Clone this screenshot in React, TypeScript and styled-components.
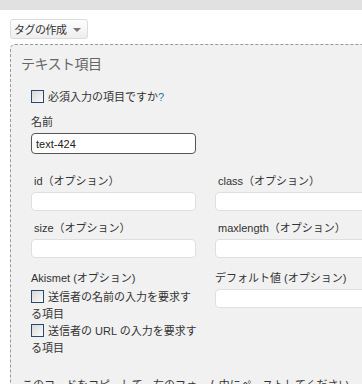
import styled, { createGlobalStyle } from 'styled-components';

const GlobalStyle = createGlobalStyle`
  html, body {
    margin: 0;
    padding: 0;
    background: #fff;
    overflow: hidden;
  }
  body {
    font-family: "Liberation Sans", Arial, "Noto Sans CJK JP", sans-serif;
    font-size: 11px;
    line-height: 17px;
    color: #333;
  }
`;

const Page = styled.div`
  width: 362px;
  height: 384px;
  overflow: hidden;
`;

const TopBar = styled.div`
  height: 10px;
  background: #e1e1e1;
`;

const ButtonRow = styled.div`
  display: flex;
  padding: 9px 0 5px 10px;
`;

const DropButton = styled.button`
  display: inline-flex;
  align-items: center;
  gap: 6px;
  height: 20px;
  padding: 0 6px 0 3px;
  border: 1px solid #dcdcdc;
  border-radius: 3px;
  background: linear-gradient(#fefefe, #eeeeee);
  font-family: inherit;
  font-size: 11px;
  letter-spacing: -0.5px;
  color: #333;
  white-space: nowrap;
  box-sizing: border-box;
`;

const Caret = styled.span`
  width: 0;
  height: 0;
  border-left: 4px solid transparent;
  border-right: 4px solid transparent;
  border-top: 4px solid #777;
  margin-top: 1px;
`;

const Panel = styled.div`
  margin-left: 10px;
  width: 400px;
  min-height: 340px;
  background: #f1f1f1;
  border-top: 1px dashed #999;
  border-left: 1px dashed #999;
  border-top-left-radius: 5px;
  padding: 9px 0 0 10px;
  box-sizing: border-box;
`;

const Title = styled.h3`
  margin: 0 0 15px 0;
  font-size: 14px;
  font-weight: normal;
  color: #666;
  line-height: 20px;
  letter-spacing: -0.5px;
`;

const Form = styled.div`
  padding-left: 10px;
`;

const CheckLine = styled.div`
  width: 169px;
`;

const Box = styled.span`
  display: inline-block;
  width: 11px;
  height: 11px;
  margin-right: 4px;
  vertical-align: -2px;
  border: 1px solid #2b4a6b;
  background: linear-gradient(135deg, #d8d8d8, #fbfbfb);
`;

const Help = styled.span`
  color: #21759b;
`;

const Label = styled.div<{ $indent?: boolean }>`
  padding-left: ${(p) => (p.$indent ? '3px' : '0')};
  margin-bottom: 2px;
  white-space: nowrap;
`;

const Input = styled.input<{ $strong?: boolean }>`
  display: block;
  box-sizing: border-box;
  width: 165px;
  height: ${(p) => (p.$strong ? '21px' : '19px')};
  padding: 0 4px;
  border: 1px solid ${(p) => (p.$strong ? '#555' : '#dfdfdf')};
  border-radius: 4px;
  background: #fff;
  font-family: "Liberation Sans", Arial, sans-serif;
  font-size: 11px;
  color: #222;
  outline: none;
`;

const Grid = styled.div`
  display: grid;
  grid-template-columns: 165px 165px;
  column-gap: 19px;
  row-gap: 9px;
  margin-top: 19px;
`;

const Field = styled.div<{ $spaced?: boolean }>`
  margin-top: ${(p) => (p.$spaced ? '3px' : '0')};
`;

const Footer = styled.p`
  margin: 20px 0 0 -9px;
  white-space: nowrap;
`;

export default function App() {
  return (
    <Page>
      <GlobalStyle />
      <TopBar />
      <ButtonRow>
        <DropButton>
          タグの作成
          <Caret />
        </DropButton>
      </ButtonRow>
      <Panel>
        <Title>テキスト項目</Title>
        <Form>
          <CheckLine style={{ marginBottom: 8 }}>
            <Box />
            必須入力の項目ですか<Help>?</Help>
          </CheckLine>
          <Label>名前</Label>
          <Input $strong defaultValue="text-424" />
          <Grid>
            <Field>
              <Label $indent>id（オプション）</Label>
              <Input />
            </Field>
            <Field>
              <Label $indent>class（オプション）</Label>
              <Input />
            </Field>
            <Field>
              <Label $indent>size（オプション）</Label>
              <Input />
            </Field>
            <Field>
              <Label $indent>maxlength（オプション）</Label>
              <Input />
            </Field>
            <Field $spaced>
              <Label>Akismet (オプション)</Label>
              <CheckLine>
                <Box />
                送信者の名前の入力を要求する項目
              </CheckLine>
              <CheckLine>
                <Box />
                送信者の URL の入力を要求する項目
              </CheckLine>
            </Field>
            <Field $spaced>
              <Label>デフォルト値 (オプション)</Label>
              <Input />
            </Field>
          </Grid>
          <Footer>このコードをコピーして、左のフォーム中にペーストしてください。</Footer>
        </Form>
      </Panel>
    </Page>
  );
}
